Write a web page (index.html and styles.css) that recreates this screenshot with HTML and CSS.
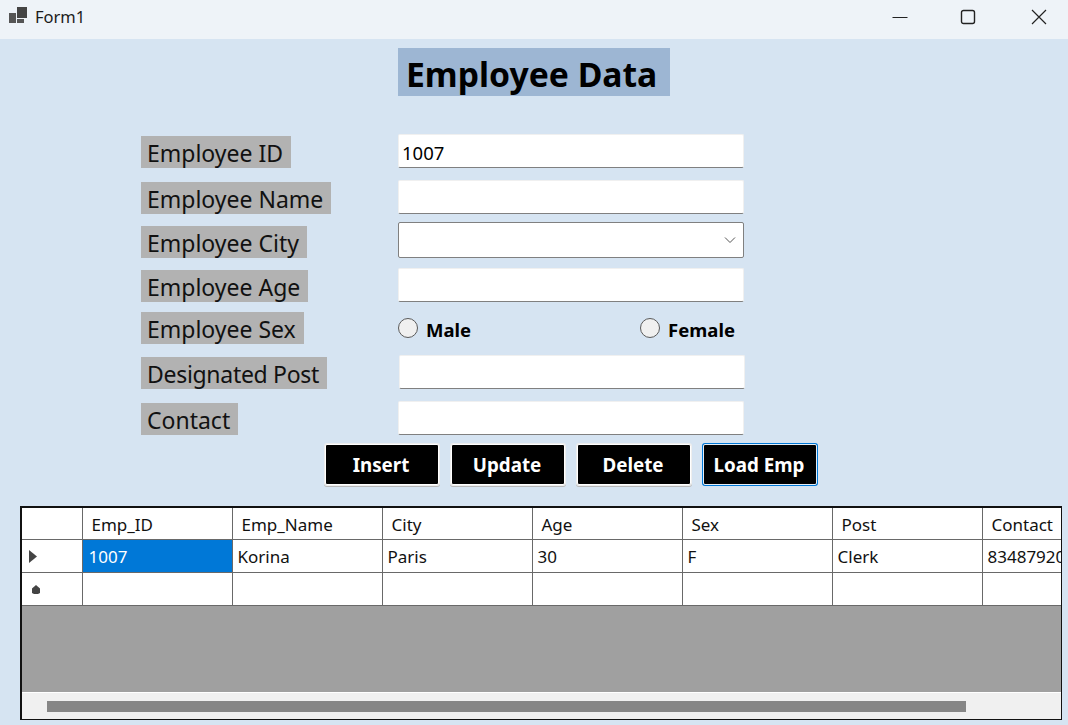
FILE: index.html
```html
<!DOCTYPE html>
<html lang="en">
<head>
    <meta charset="UTF-8">
    <meta name="viewport" content="width=device-width, initial-scale=1.0">
    <title>Form1</title>
    <link rel="stylesheet" href="styles.css">
</head>
<body>
    <div class="titlebar">
        <svg class="app-icon" width="20" height="20" viewBox="0 0 20 20">
            <rect x="1" y="6" width="7" height="10" fill="#555"/>
            <rect x="9" y="0" width="10" height="11" fill="#444"/>
            <rect x="9" y="12" width="7" height="4" fill="#555"/>
        </svg>
        <span class="title-text">Form1</span>
        <div class="window-buttons">
            <svg class="win-btn win-min" width="16" height="16" viewBox="0 0 16 16"><path d="M0.5 8.5H15.5" stroke="#222" fill="none"/></svg>
            <svg class="win-btn" width="16" height="16" viewBox="0 0 16 16"><rect x="1.5" y="1.5" width="13" height="13" rx="2" stroke="#222" stroke-width="1.4" fill="none"/></svg>
            <svg class="win-btn" width="16" height="16" viewBox="0 0 16 16"><path d="M1 1L15 15M15 1L1 15" stroke="#222" stroke-width="1.2" fill="none"/></svg>
        </div>
    </div>

    <div class="form-area">
        <div class="heading-row">
            <h1>Employee Data</h1>
        </div>

        <div class="fields">
            <div class="row row-id">
                <label class="field-label">Employee ID</label>
                <input class="text-input" type="text" value="1007">
            </div>
            <div class="row row-name">
                <label class="field-label">Employee Name</label>
                <input class="text-input" type="text">
            </div>
            <div class="row row-city">
                <label class="field-label">Employee City</label>
                <div class="combo">
                    <svg width="12" height="8" viewBox="0 0 12 8"><path d="M1 1.5L6 6.5L11 1.5" stroke="#555" fill="none"/></svg>
                </div>
            </div>
            <div class="row row-age">
                <label class="field-label">Employee Age</label>
                <input class="text-input" type="text">
            </div>
            <div class="row row-sex">
                <label class="field-label">Employee Sex</label>
                <div class="radios">
                    <span class="radio-item"><span class="radio"></span>Male</span>
                    <span class="radio-item"><span class="radio"></span>Female</span>
                </div>
            </div>
            <div class="row row-post">
                <label class="field-label">Designated Post</label>
                <input class="text-input" type="text">
            </div>
            <div class="row row-contact">
                <label class="field-label">Contact</label>
                <input class="text-input" type="text">
            </div>
        </div>

        <div class="buttons">
            <button class="btn">Insert</button>
            <button class="btn">Update</button>
            <button class="btn">Delete</button>
            <button class="btn btn-focus">Load Emp</button>
        </div>
    </div>

    <div class="grid-box">
        <table class="grid">
            <colgroup>
                <col class="col-header">
                <col class="col-data"><col class="col-data"><col class="col-data">
                <col class="col-data"><col class="col-data"><col class="col-data"><col class="col-data">
            </colgroup>
            <tr class="head-row">
                <th></th>
                <th>Emp_ID</th>
                <th>Emp_Name</th>
                <th>City</th>
                <th>Age</th>
                <th>Sex</th>
                <th>Post</th>
                <th>Contact</th>
            </tr>
            <tr>
                <td class="row-head"><svg width="8" height="13" viewBox="0 0 8 13"><path d="M0 0L8 6.5L0 13Z" fill="#444"/></svg></td>
                <td class="selected">1007</td>
                <td>Korina</td>
                <td>Paris</td>
                <td>30</td>
                <td>F</td>
                <td>Clerk</td>
                <td>83487920</td>
            </tr>
            <tr>
                <td class="row-head"><svg class="new-row-mark" width="8" height="9" viewBox="0 0 8 9"><path d="M4 0L8 3.5V8L6 9H2L0 8V3.5Z" fill="#444"/></svg></td>
                <td></td><td></td><td></td><td></td><td></td><td></td><td></td>
            </tr>
        </table>
        <div class="grid-empty"></div>
        <div class="hscroll">
            <div class="hscroll-thumb"></div>
        </div>
    </div>
</body>
</html>
```

FILE: styles.css
```css
body {
    font-family: "Noto Sans", "Open Sans", Arial, sans-serif;
    margin: 0;
    padding: 0;
    width: 1068px;
    height: 725px;
    overflow: hidden;
    background-color: #d6e4f2;
    color: #000;
}

.titlebar {
    height: 39px;
    display: flex;
    align-items: center;
    background-color: #eef3f8;
    padding-left: 8px;
    box-sizing: border-box;
}

.app-icon {
    margin-top: -5px;
}

.title-text {
    font-size: 16.5px;
    margin-left: 7px;
    margin-top: -6px;
    color: #1a1a1a;
}

.window-buttons {
    margin-left: auto;
    margin-top: -5px;
    display: flex;
    gap: 55px;
    padding-right: 21px;
}

.win-min {
    margin-right: -3px;
}

.form-area {
    height: 467px;
}

.heading-row {
    padding: 9px 0 0 398px;
    height: 95px;
    box-sizing: border-box;
}

h1 {
    display: inline-block;
    margin: 0;
    padding: 0 13px 0 8px;
    height: 48px;
    line-height: 52px;
    font-size: 33.7px;
    font-weight: bold;
    background-color: #9db6d3;
}

.fields {
    padding-left: 141px;
}

.row {
    display: flex;
    align-items: flex-start;
    width: 603px;
}

.field-label {
    display: block;
    flex: none;
    height: 32px;
    line-height: 35px;
    padding: 0 8px 0 6px;
    font-size: 23px;
    background-color: #b2b2b2;
    color: #111;
    box-sizing: border-box;
}

.text-input {
    width: 346px;
    height: 34px;
    padding: 2px 3px 0;
    font-family: inherit;
    font-size: 18.5px;
    background: #fff;
    border: 1px solid #f0f0f0;
    border-bottom: 1px solid #808080;
    border-radius: 2px;
    box-sizing: border-box;
    outline: none;
    color: #000;
}

.row .text-input,
.row .combo,
.row .radios {
    margin-left: auto;
}

.row-id .field-label { margin-top: 2px; }
.row-name { margin-top: 12px; }
.row-name .field-label { margin-top: 2px; }
.row-city { margin-top: 8px; height: 36px; }
.row-city .field-label { margin-top: 4px; }
.row-age { margin-top: 10px; height: 34px; }
.row-age .field-label { margin-top: 2px; }
.row-sex { margin-top: 10px; height: 33px; }
.row-post { margin-top: 10px; width: 604px; }
.row-post .field-label { margin-top: 2px; letter-spacing: -0.3px; }
.row-contact { margin-top: 12px; }
.row-contact .field-label { margin-top: 2px; }

.combo {
    width: 346px;
    height: 36px;
    display: flex;
    align-items: center;
    justify-content: flex-end;
    padding-right: 7px;
    background: #fff;
    border: 1px solid #808080;
    border-radius: 2px;
    box-sizing: border-box;
}

.radios {
    width: 346px;
    display: flex;
    justify-content: space-between;
    padding: 3px 9px 0 0;
    box-sizing: border-box;
}

.radio-item {
    display: flex;
    align-items: center;
    gap: 8px;
    font-size: 18.5px;
    font-weight: bold;
    height: 28px;
}

.radio {
    display: inline-block;
    width: 20px;
    height: 20px;
    margin-top: -3px;
    border: 1px solid #5a5a5a;
    border-radius: 50%;
    background: #f0f0f0;
    box-sizing: border-box;
}

.buttons {
    display: flex;
    gap: 12px;
    padding: 9px 0 0 325px;
}

.btn {
    width: 114px;
    height: 41px;
    padding: 1px 2px 0 0;
    font-family: inherit;
    font-size: 18.8px;
    font-weight: bold;
    color: #fff;
    background-color: #000;
    border: 1px solid #fff;
    border-radius: 2px;
    box-shadow: 0 0 0 1px #eee, 0 1px 0 1px #b8b8b8;
    cursor: pointer;
}

.btn-focus {
    border-color: #e4eef8;
    box-shadow: 0 0 0 1px #0078d7;
    outline: none;
}

.grid-box {
    width: 1042px;
    height: 214px;
    margin-left: 20px;
    border: 2px solid #111;
    border-right-width: 1px;
    border-bottom-width: 1px;
    box-sizing: border-box;
    overflow: hidden;
    background-color: #a0a0a0;
}

.grid {
    border-collapse: collapse;
    table-layout: fixed;
    width: 1110px;
    background: #fff;
    font-size: 17px;
}

.col-header { width: 60px; }
.col-data { width: 150px; }

.grid th,
.grid td {
    height: 33px;
    padding: 2px 0 0 5px;
    border-right: 1px solid #696969;
    border-bottom: 1px solid #696969;
    box-sizing: border-box;
    font-weight: normal;
    text-align: left;
    white-space: nowrap;
    overflow: hidden;
    color: #111;
}

.grid th {
    padding-left: 9px;
    height: 31px;
}

.grid td.row-head {
    padding: 2px 0 0 7px;
    line-height: 0;
}

.new-row-mark {
    margin-left: 3px;
}

.grid td.selected {
    padding-left: 6px;
    background-color: #0078d7;
    color: #fff;
}

.grid-empty {
    height: 87px;
    border-bottom: 1px solid #fff;
    box-sizing: border-box;
}

.hscroll {
    height: 26px;
    padding: 8px 0 0 25px;
    background-color: #f0f0f0;
    box-sizing: border-box;
}

.hscroll-thumb {
    width: 919px;
    height: 11px;
    background-color: #868686;
}
```
